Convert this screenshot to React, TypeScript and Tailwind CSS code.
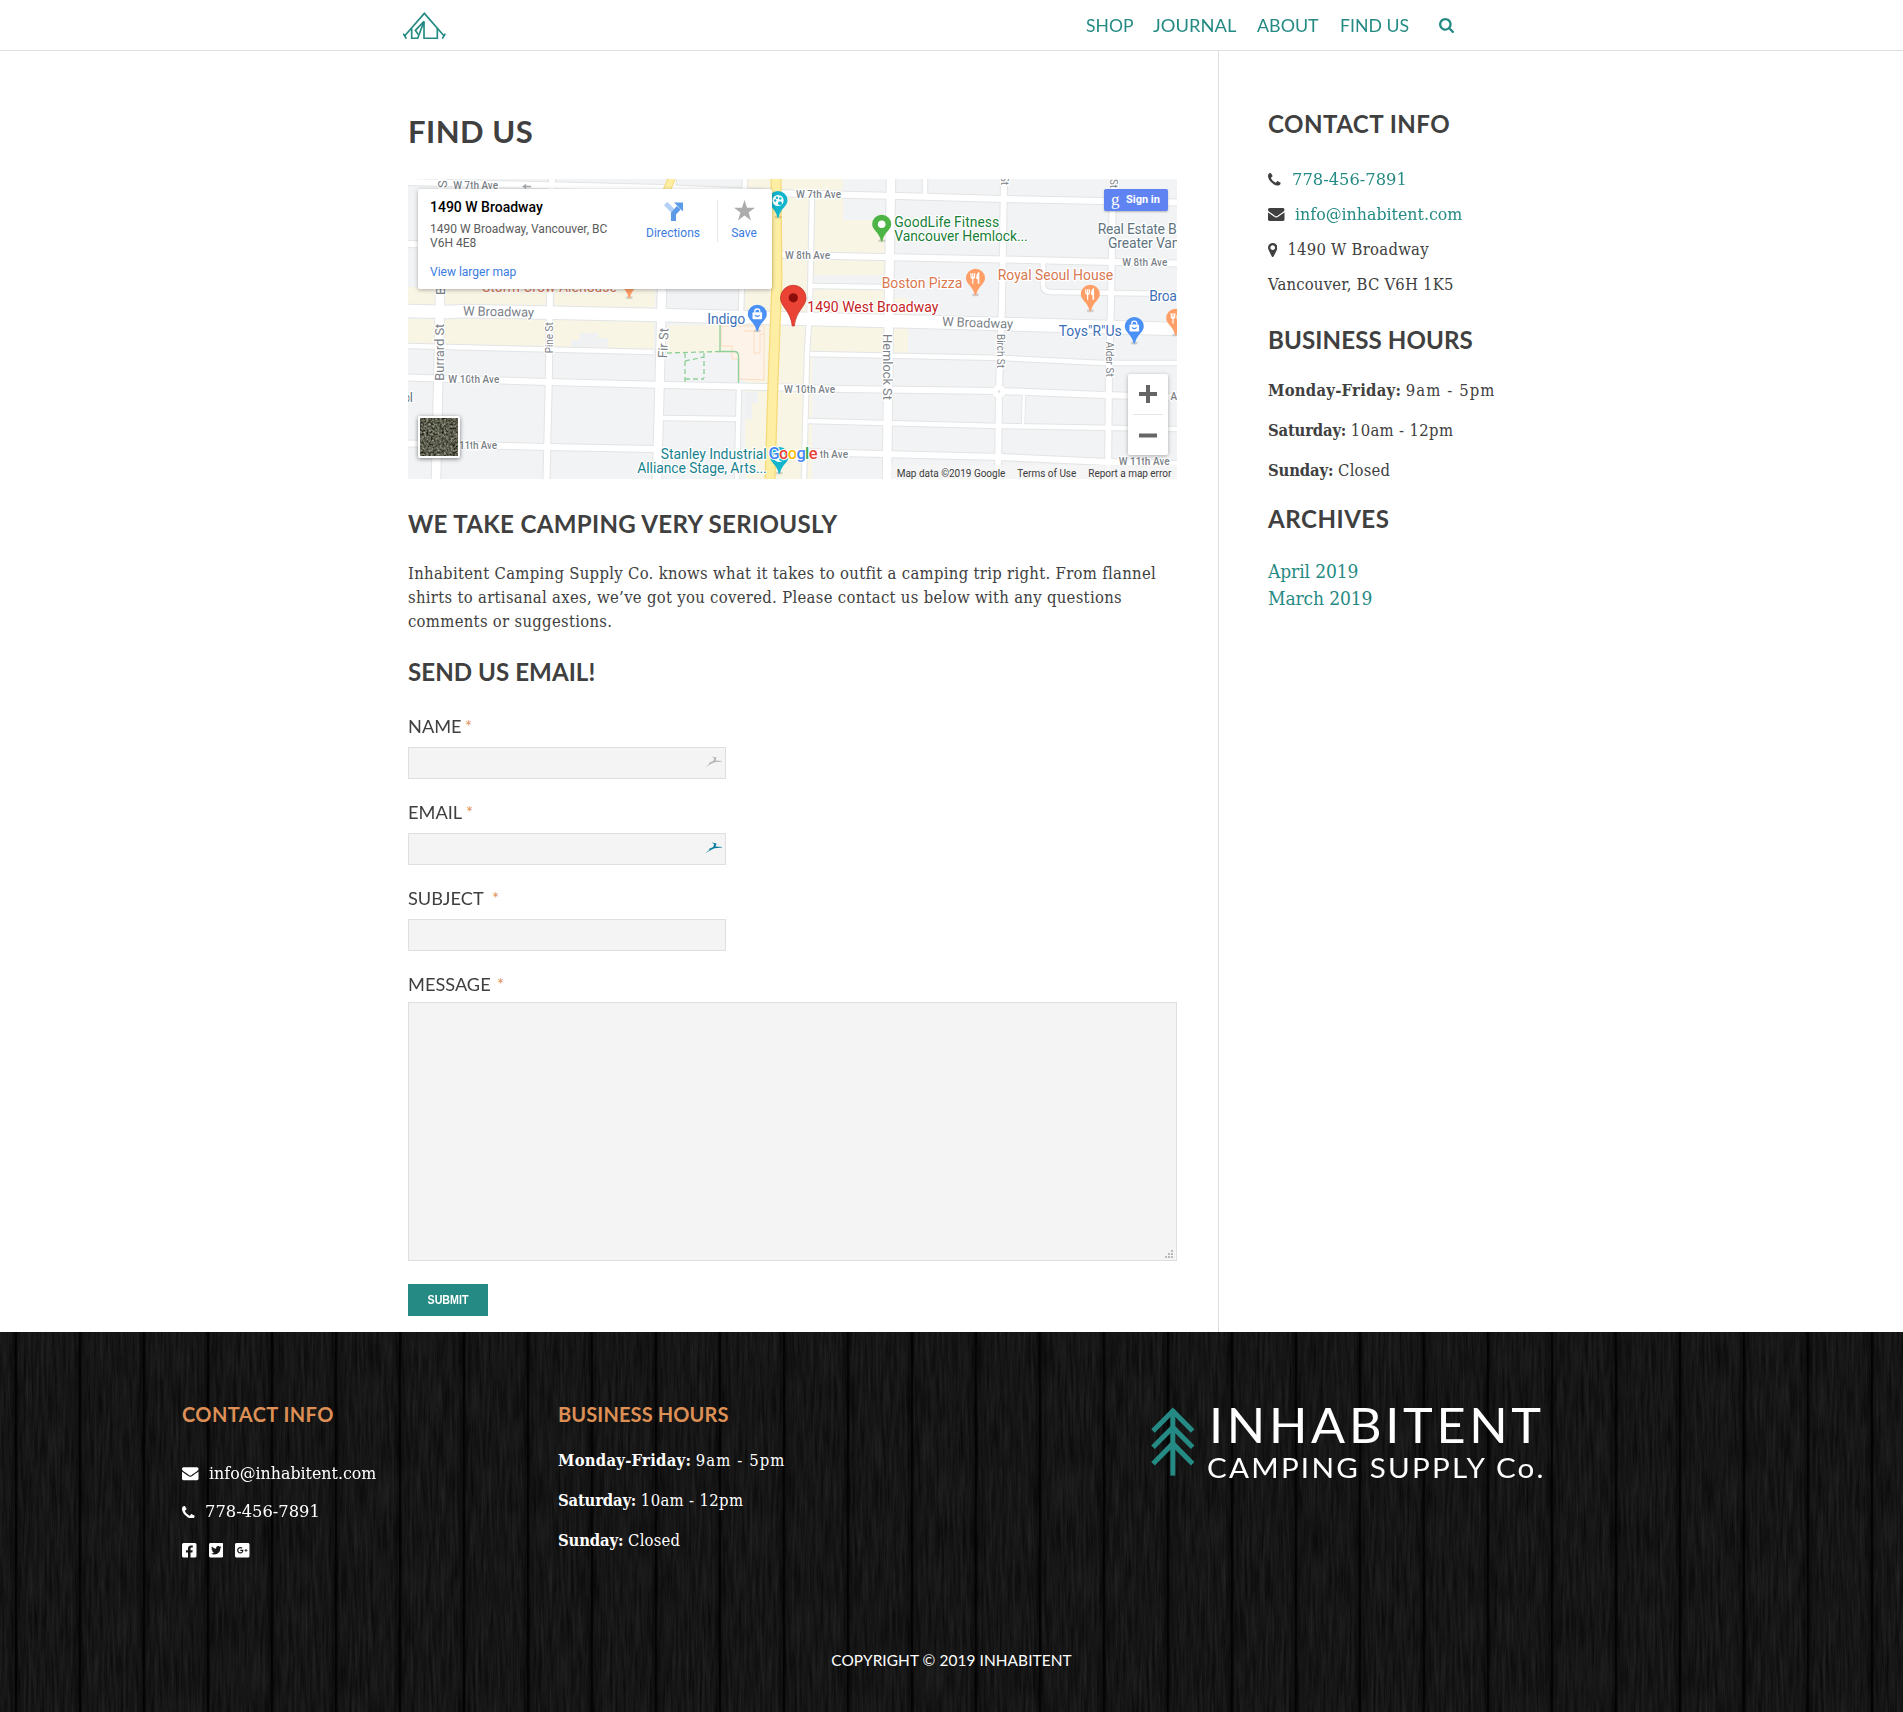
import type { ReactNode } from "react";
import { FaFacebookSquare, FaTwitterSquare, FaGooglePlusSquare } from "react-icons/fa";

const serif = "font-['DejaVu_Serif_Condensed','DejaVu_Serif',serif]";
const sans = "font-['Lato',sans-serif]";

function PhoneIcon({ className }: { className: string }) {
  return (
    <svg viewBox="0 128 1408 1408" className={className} fill="currentColor">
      <path d="M1408 1240q0 27-10 70.500t-21 68.500q-21 50-122 106-94 51-186 51-27 0-53-3.500t-57.500-12.500-47-14.500-55.500-20.500-49-18q-98-35-175-83-127-79-264-216t-216-264q-48-77-83-175-3-9-18-49t-20.500-55.500-14.500-47-12.500-57.500-3.500-53q0-92 51-186 56-101 106-122 25-11 68.500-21t70.500-10q14 0 21 3 18 6 53 76 11 19 30 54t35 63.500 31 53.500q3 4 17.500 25t21.500 35.500 7 28.500q0 20-28.500 50t-62 55-62 53-28.500 46q0 9 5 22.500t8.500 20.500 14 24 11.500 19q76 137 174 235t235 174q2 1 19 11.500t24 14 20.500 8.500 22.500 5q18 0 46-28.500t53-62 55-62 50-28.500q14 0 28.500 7t35.500 21.500 25 17.500q25 15 53.500 31t63.500 35 54 30q70 35 76 53 3 7 3 21z" />
    </svg>
  );
}

function EnvelopeIcon({ className }: { className: string }) {
  return (
    <svg viewBox="0 256 1792 1408" className={className} fill="currentColor">
      <path d="M1792 710v794q0 66-47 113t-113 47h-1472q-66 0-113-47t-47-113v-794q44 49 101 87 362 246 497 345 57 42 92.500 65.500t94.500 48 110 24.500h2q51 0 110-24.500t94.500-48 92.500-65.500q170-123 498-345 57-39 100-87zm0-294q0 79-49 151t-122 123q-376 261-468 325-10 7-42.500 31t-54 38.500-52 32.500-57.500 27-50 9h-2q-23 0-50-9t-57.500-27-52-32.500-54-38.500-42.500-31q-91-64-262-182.500t-205-142.500q-62-42-117-115.500t-55-136.500q0-78 41.500-130t118.500-52h1472q65 0 112.500 47t47.500 113z" />
    </svg>
  );
}

function MarkerIcon({ className }: { className: string }) {
  return (
    <svg viewBox="0 128 1024 1536" className={className} fill="currentColor">
      <path d="M768 640q0-106-75-181t-181-75-181 75-75 181 75 181 181 75 181-75 75-181zm256 0q0 109-33 179l-364 774q-16 33-47.500 52t-67.500 19-67.500-19-46.500-52l-365-774q-33-70-33-179 0-212 150-362t362-150 362 150 150 362z" />
    </svg>
  );
}

function SearchIcon({ className }: { className: string }) {
  return (
    <svg viewBox="0 128 1664 1664" className={className} fill="currentColor">
      <path d="M1152 832q0-185-131.500-316.500t-316.500-131.500-316.500 131.500-131.500 316.500 131.500 316.500 316.500 131.500 316.500-131.500 131.500-316.500zm512 832q0 52-38 90t-90 38q-54 0-90-38l-343-342q-179 124-399 124-143 0-273.500-55.500t-225-150-150-225-55.500-273.500 55.500-273.500 150-225 225-150 273.500-55.500 273.500 55.500 225 150 150 225 55.500 273.500q0 220-124 399l343 343q37 37 37 90z" />
    </svg>
  );
}

function TentLogo() {
  return (
    <svg viewBox="0 0 128 82" className="h-[27.3px] w-[42.7px]" fill="none" stroke="#248a83" strokeWidth="5">
      <path d="M4 73 64 4 124 73" />
      <path d="M1 65 10 80M127 65 118 80" />
      <path d="M26 50V79H44L63 28V79H103V48" />
      <path d="M63 28 37 55 46 68" />
    </svg>
  );
}

function Header() {
  return (
    <header className="flex h-[51px] items-center border-b border-[#dfdfdf] bg-white pt-px pl-[403px]">
      <TentLogo />
      <nav className={`${sans} ml-[640px] flex items-center text-[16.7px] leading-6 text-[#248a83]`}>
        <a className="w-[67px] whitespace-nowrap">
          <span className="inline-block origin-left scale-x-[1.05]">SHOP</span>
        </a>
        <a className="w-[104px] whitespace-nowrap">
          <span className="inline-block origin-left scale-x-[1.1]">JOURNAL</span>
        </a>
        <a className="w-[83px] whitespace-nowrap">
          <span className="inline-block origin-left scale-x-[1.07]">ABOUT</span>
        </a>
        <a className="w-[99px] whitespace-nowrap">
          <span className="inline-block origin-left scale-x-[1.06]">FIND US</span>
        </a>
        <SearchIcon className="mb-px size-[15px]" />
      </nav>
    </header>
  );
}

const minorRoads = [
  "M404 107 475 108",
  "M635 82V106Q635 113 643 113L769 115",
  "M0 167 245 173",
  "M402 175 595 179 695 184 769 184",
  "M255 239 330 240",
  "M400 242 592 247 769 250",
  "M337 0 333 135",
  "M331 208 329 300",
  "M404 18 402 124 399 175 396 300",
  "M517 0V15",
];
const streets = [
  "M0 3 255 9 382 14.500 490 17 595 20 769 23.500",
  "M0 65 372 75.500 425 77 595 80.500 769 84.500",
  "M0 198.500 139 203 259 206 359 208 432 210 592 212 695 216 769 218",
  "M0 264.500 139 268 247 270",
  "M396 273 592 278 700 283 769 285",
  "M144 0 142 110 141 190 138.500 300",
  "M596 0 594 124 591 211 590 300",
  "M705 0 703 124 701 190 700 300",
];
const avenues = ["M34 0 31 170 28 300", "M264 0 255 50 254 110 252 190 249 300", "M483 0 481 124 479 300"];
const broadway = "M0 132 40 133 60 132 250 136 402 140 595 145 769 150";

function RoadSet({ paths, width }: { paths: string[]; width: number }) {
  return (
    <>
      {paths.map((d) => (
        <path key={d} d={d} strokeWidth={width} />
      ))}
    </>
  );
}

function Pin({ x, y, color, children }: { x: number; y: number; color: string; children?: ReactNode }) {
  return (
    <g transform={`translate(${x} ${y})`}>
      <ellipse cx="0" cy="16.500" rx="3.500" ry="1.500" fill="#000" opacity="0.150" />
      <path d="M-9.500 0A9.500 9.500 0 0 1 9.500 0C9.500 6 2.500 7.500 .600 17H-.600C-2.500 7.500-9.500 6-9.500 0Z" fill={color} />
      {children}
    </g>
  );
}

const fork = (
  <g fill="none" stroke="#fff" strokeWidth="1.200">
    <path d="M-4.500-5V-2Q-4.500 0-2.700 0T-.900-2V-5M-2.700-5V5.500" />
    <path d="M3 5.500V-5Q1.500-4 1.500 0H3" strokeWidth="1.600" />
  </g>
);
const bag = (
  <g>
    <rect x="-4.800" y="-2" width="9.600" height="7" rx="1" fill="#fff" />
    <path d="M-2.500-2V-3Q-2.500-5.300 0-5.300T2.500-3V-2" fill="none" stroke="#fff" strokeWidth="1.300" />
    <path d="M-2.300.800Q0 3.500 2.300.800" fill="none" stroke="#4a90f5" strokeWidth="1.200" />
  </g>
);
const palette = (
  <g>
    <circle r="5.600" fill="#fff" />
    <g fill="#12b5cb">
      <circle cx="-2.800" cy="0" r="1.200" />
      <circle cx="-1" cy="-2.800" r="1.200" />
      <circle cx="2.300" cy="-2" r="1.200" />
      <circle cx="2" cy="2.800" r="2" />
    </g>
  </g>
);

type Label = { t: string; x: number; y: number; w: number; s: number; c: string; r?: number; m?: boolean };
const gray = "#7b8187";
const labels: Label[] = [
  { t: "1490 West Broadway", x: 399.3, y: 132.9, w: 131, s: 14, c: "#c5221f" },
  { t: "GoodLife Fitness", x: 486.3, y: 48.3, w: 105, s: 14, c: "#188038" },
  { t: "Vancouver Hemlock...", x: 486.3, y: 62.3, w: 133.5, s: 14, c: "#188038" },
  { t: "Boston Pizza", x: 473.7, y: 109.3, w: 80.6, s: 14, c: "#d9774f" },
  { t: "Royal Seoul House", x: 589.7, y: 101.3, w: 115.6, s: 14, c: "#d9774f" },
  { t: "Real Estate B", x: 689.7, y: 55.3, w: 79, s: 14, c: "#607480" },
  { t: "Greater Van", x: 700, y: 69.3, w: 71.5, s: 14, c: "#607480" },
  { t: "Broa", x: 741.3, y: 122.3, w: 27.5, s: 14, c: "#3d6fb8" },
  { t: 'Toys"R"Us', x: 650.7, y: 157.3, w: 63, s: 14, c: "#3d6fb8" },
  { t: "Indigo", x: 299.3, y: 145, w: 38, s: 14, c: "#3d6fb8" },
  { t: "Storm Crow Alehouse", x: 74, y: 112.7, w: 135, s: 14, c: "#d9774f" },
  { t: "Stanley Industrial", x: 252.7, y: 280.3, w: 106, s: 14, c: "#16828e" },
  { t: "Alliance Stage, Arts...", x: 229.3, y: 294.3, w: 129.5, s: 14, c: "#16828e" },
  { t: "W Broadway", x: 55, y: 136.5, w: 71, s: 13, c: gray, r: 1 },
  { t: "W Broadway", x: 534, y: 147, w: 71, s: 13, c: gray, r: 2 },
  { t: "W 7th Ave", x: 45.3, y: 9.9, w: 44.7, s: 10, c: gray, m: true },
  { t: "W 7th Ave", x: 388, y: 18.5, w: 45, s: 10, c: gray, m: true },
  { t: "W 8th Ave", x: 377, y: 79.8, w: 45, s: 10, c: gray, m: true },
  { t: "W 8th Ave", x: 714.3, y: 86.7, w: 45, s: 10, c: gray, m: true },
  { t: "W 10th Ave", x: 40.3, y: 203.5, w: 51, s: 10, c: gray, m: true },
  { t: "W 10th Ave", x: 376, y: 213.5, w: 51, s: 10, c: gray, m: true },
  { t: "11th Ave", x: 51, y: 269.9, w: 38, s: 10, c: gray, m: true },
  { t: "th Ave", x: 412, y: 279, w: 28, s: 10, c: gray, m: true },
  { t: "W 11th Ave", x: 710.7, y: 285.9, w: 51, s: 10, c: gray, m: true },
  { t: "A", x: 762.5, y: 221, w: 6.5, s: 10, c: gray, m: true },
  { t: "ol", x: -5, y: 223, w: 10, s: 13, c: "#607480" },
  { t: "Burrard St", x: 36, y: 201.7, w: 57, s: 13, c: gray, r: -90 },
  { t: "B", x: 36.5, y: 116, w: 8, s: 13, c: gray, r: -90 },
  { t: "S", x: 39, y: 9, w: 8, s: 13, c: gray, r: -90 },
  { t: "Pine St", x: 145.3, y: 174.3, w: 31, s: 10, c: gray, r: -90 },
  { t: "Fir St", x: 259, y: 179.3, w: 30, s: 13, c: gray, r: -87 },
  { t: "Hemlock St", x: 475, y: 155, w: 66, s: 13, c: gray, r: 90 },
  { t: "Birch St", x: 589.3, y: 155, w: 34, s: 10, c: gray, r: 90 },
  { t: "Alder St", x: 698, y: 162.7, w: 35, s: 10, c: gray, r: 90 },
  { t: "St", x: 592.5, y: -3, w: 9, s: 10, c: gray, r: 90 },
  { t: "St", x: 702, y: 0, w: 9, s: 10, c: gray, r: 90 },
];

function StreetMap() {
  return (
    <svg viewBox="0 0 769 300" className="absolute inset-0 h-full w-full font-['Roboto',sans-serif]">
      <rect width="769" height="300" fill="#f1f3f4" />
      <g fill="#f9f5e5">
        <path d="M0 108H247V130H0ZM0 140H246V170H0ZM259 146H345V174H259ZM337 0H404V300H337Z" />
        <path d="M404 0H435V41H477V96H404ZM404 109H478V174H402ZM478 119H500V174H478Z" />
      </g>
      <path d="M171 154H190V159H200V168H163V161H171ZM337 213H350V224H344V240H337Z" fill="#eff1f3" />
      <g fill="none" stroke="#e2e4e6">
        <RoadSet paths={minorRoads} width={6.5} />
        <RoadSet paths={streets} width={8} />
        <RoadSet paths={avenues} width={10.5} />
        <path d={broadway} strokeWidth="14.500" />
        <path d="M616 216 615 247" strokeWidth="4" />
      </g>
      <g fill="none" stroke="#fff">
        <RoadSet paths={minorRoads} width={4.5} />
        <RoadSet paths={streets} width={6} />
        <RoadSet paths={avenues} width={8.5} />
        <path d={broadway} strokeWidth="12.500" />
        <path d="M616 216 615 247" strokeWidth="2.500" />
      </g>
      <circle cx="591" cy="212.500" r="6.500" fill="#fff" />
      <circle cx="591" cy="212.500" r="1.200" fill="#dcdee0" />
      <path d="M313 147H356V201L331 200V180H324V167H313Z" fill="#fef3e9" stroke="#fbdcc0" />
      <path d="M336 152H346V174H352V155H355" fill="none" stroke="#fbdcc0" />
      <g fill="none" stroke="#8fcf9a" strokeWidth="1.300">
        <path d="M312 146V172.500H326Q330.500 172.500 330.500 177V204" />
        <path d="M259 174 312 172.500M277 174V203M296 174V199M277 182 296 178M277 200H296" strokeDasharray="5 3" />
      </g>
      <g fill="none">
        <path d="M368 0 369 100 365 204 362 300" stroke="#f6d978" strokeWidth="11" />
        <path d="M368 0 369 100 365 204 362 300" stroke="#fdeea3" strokeWidth="8.500" />
        <path d="M264-1 258 13" stroke="#f6d978" strokeWidth="8" />
        <path d="M264-1 258 13" stroke="#fdeea3" strokeWidth="6" />
        <path d="M116 7.500H123M118 5.500 115.500 7.500 118 9.500" stroke="#a3a7aa" strokeWidth="1.500" />
      </g>
      <Pin x={370} y={21.5} color="#12b5cb">{palette}</Pin>
      <Pin x={371.3} y={277.5} color="#12b5cb">{palette}</Pin>
      <Pin x={221.3} y={102} color="#ff9e67" />
      <Pin x={473.7} y={45.3} color="#4db546">
        <circle r="3.800" fill="#fff" />
      </Pin>
      <Pin x={567.5} y={99.3} color="#ff9e67">{fork}</Pin>
      <Pin x={682.3} y={115.3} color="#ff9e67">{fork}</Pin>
      <Pin x={767.7} y={139.3} color="#ff9e67">{fork}</Pin>
      <Pin x={726.3} y={147.5} color="#4a90f5">{bag}</Pin>
      <Pin x={349.3} y={135.3} color="#4a90f5">{bag}</Pin>
      {labels.map((l, i) => (
        <text
          key={i}
          transform={`translate(${l.x} ${l.y}) rotate(${l.r ?? 0})`}
          fontSize={l.s}
          fontWeight={l.m ? 500 : 400}
          fill={l.c}
          stroke="#fff"
          strokeWidth="2.500"
          strokeLinejoin="round"
          paintOrder="stroke"
          textLength={l.w}
        >
          {l.t}
        </text>
      ))}
      <path
        d="M372.500 119A12.700 12.700 0 0 1 398 119C398 127.500 388 131.500 386.300 147H384.300C382.500 131.500 372.500 127.500 372.500 119Z"
        fill="#ea4335"
        stroke="#c5362b"
        strokeWidth="0.800"
      />
      <circle cx="385.300" cy="118.800" r="4.600" fill="#8c0d09" />
      <text x="360.500" y="279.500" fontSize="16.500" fontWeight="500" textLength="49" stroke="#fff" strokeWidth="2" paintOrder="stroke">
        <tspan fill="#4285f4">G</tspan>
        <tspan fill="#ea4335">o</tspan>
        <tspan fill="#fbbc05">o</tspan>
        <tspan fill="#4285f4">g</tspan>
        <tspan fill="#34a853">l</tspan>
        <tspan fill="#ea4335">e</tspan>
      </text>
      <rect x="483" y="286" width="286" height="14" fill="#f5f5f5" opacity="0.750" />
      <g fontSize="10" fill="#3c3c3c">
        <text x="488.700" y="298" textLength="108.700">Map data ©2019 Google</text>
        <text x="609.300" y="298" textLength="59">Terms of Use</text>
        <text x="680.300" y="298" textLength="83">Report a map error</text>
      </g>
    </svg>
  );
}

function MapCard() {
  return (
    <div className="absolute top-[10px] left-[10px] flex h-[100px] w-[354px] rounded-[2px] bg-white pl-3 text-[12px] shadow-[0_1px_4px_rgba(0,0,0,0.3)]">
      <div className="w-[205px] pt-[10px]">
        <div className="text-[14px] leading-[17px] font-medium text-black">1490 W Broadway</div>
        <div className="mt-[6px] leading-[14px] text-[#5b5b5b]">
          1490 W Broadway, Vancouver, BC
          <br />
          V6H 4E8
        </div>
        <div className="mt-[15px] leading-[14px] text-[#3a7be0]">View larger map</div>
      </div>
      <div className="flex w-[76px] flex-col items-center pt-[13px] text-[#3a7be0]">
        <svg viewBox="0 0 18 18" className="size-[19px]" fill="none">
          <path d="M1.500 1.500 9 9" stroke="#b3d1f8" strokeWidth="4.500" />
          <path d="M9 18V11L14 5.500" stroke="#5c9ae8" strokeWidth="4.800" />
          <path d="M9.500.500H18V9Z" fill="#5c9ae8" />
        </svg>
        <span className="mt-[5px] leading-[14px]">Directions</span>
      </div>
      <div className="mt-[11px] ml-[6px] h-[42px] w-px bg-[#e6e6e6]" />
      <div className="flex w-[52px] flex-col items-center pt-[11px] text-[#3a7be0]">
        <svg viewBox="0 0 20 20" className="size-[21px]" fill="#acacac">
          <path d="M10 0 12.400 7.300H20L13.900 11.800 16.200 19.500 10 14.800 3.800 19.500 6.100 11.800 0 7.300H7.600Z" />
        </svg>
        <span className="mt-[5px] leading-[14px]">Save</span>
      </div>
    </div>
  );
}

function SatelliteThumb() {
  return (
    <div className="absolute top-[237px] left-[10px] size-[42px] overflow-hidden rounded-[2px] border-2 border-white shadow-[0_1px_4px_rgba(0,0,0,0.5)]">
      <svg viewBox="0 0 38 38" className="size-full">
        <filter id="aerial" x="0" y="0" width="100%" height="100%" colorInterpolationFilters="sRGB">
          <feTurbulence type="fractalNoise" baseFrequency="0.450 0.500" numOctaves="3" seed="4" />
          <feColorMatrix values="0.900 0 0 0 -0.100  0.900 0 0 0 -0.095  0.850 0 0 0 -0.130  0 0 0 0 1" />
        </filter>
        <rect width="38" height="38" filter="url(#aerial)" />
        <path d="M0 8H38M0 19H38M0 30H38M6 0V38M17 0V38M29 0V38" stroke="#77786c" strokeWidth="0.700" opacity="0.600" />
      </svg>
    </div>
  );
}

function MapPanel() {
  return (
    <div className="relative mt-7 h-[300px] w-[769px] overflow-hidden font-['Roboto',sans-serif]">
      <StreetMap />
      <MapCard />
      <SatelliteThumb />
      <div className="absolute top-[10px] left-[696px] flex h-[22px] w-16 items-center rounded-[2px] bg-[#5f84f2] pl-[7px] text-white shadow-[0_1px_2px_rgba(0,0,0,0.25)]">
        <span className="w-[15px] font-['Liberation_Serif',serif] text-[17px] leading-[16px]">g</span>
        <span className="text-[11px] leading-[14px] font-bold">Sign in</span>
      </div>
      <div className="absolute top-[195px] left-[720px] flex h-[81px] w-10 flex-col items-center justify-between rounded-[2px] bg-white shadow-[0_1px_4px_rgba(0,0,0,0.3)]">
        <svg viewBox="0 0 40 40" className="size-10">
          <path d="M11 20H29M20 11V29" stroke="#666" strokeWidth="4" />
        </svg>
        <div className="h-px w-[30px] bg-[#e6e6e6]" />
        <svg viewBox="0 0 40 40" className="size-10">
          <path d="M11 20.500H29" stroke="#666" strokeWidth="4" />
        </svg>
      </div>
    </div>
  );
}

function FieldLabel({ text, width, className }: { text: string; width: string; className: string }) {
  return (
    <label className={`${sans} flex text-[16.7px] leading-6 ${className}`}>
      <span className={width}>
        <span className="inline-block origin-left scale-x-[1.09]">{text}</span>
      </span>
      <span className="text-[#e1935c]">*</span>
    </label>
  );
}

function Bird({ className }: { className: string }) {
  return (
    <svg viewBox="0 0 17 12" className={`absolute top-[9px] right-[4px] h-3 w-[17px] ${className}`} fill="currentColor">
      <path d="M0 11.600 4.500 7.700 3.800 7 8.200 5 9.200 2.200 6.800.600 11.600 1.400 10.500 4.600 17 4.900V5.600L9.500 6.300 5.800 8Z" />
    </svg>
  );
}

function TextField({ children }: { children?: ReactNode }) {
  return (
    <div className="relative mt-2 w-[318px]">
      <input className="block h-8 w-full border border-[#dfdfdf] bg-[#f4f4f4]" />
      {children}
    </div>
  );
}

const h2 = `${sans} text-[24.1px] leading-[30px] font-bold whitespace-nowrap`;

function MainColumn() {
  return (
    <main className="w-[811px] border-r border-[#dfdfdf] pb-4">
      <h1 className={`${sans} mt-[60px] text-[31px] leading-10 font-bold tracking-[0.5px]`}>FIND US</h1>
      <MapPanel />
      <h2 className={`${h2} mt-[30px] tracking-[0.3px]`}>WE TAKE CAMPING VERY SERIOUSLY</h2>
      <p className={`${serif} mt-[23px] text-[16.5px] leading-6 tracking-[0.31px] whitespace-nowrap`}>
        Inhabitent Camping Supply Co. knows what it takes to outfit a camping trip right. From flannel
        <br />
        shirts to artisanal axes, we’ve got you covered. Please contact us below with any questions
        <br />
        comments or suggestions.
      </p>
      <h2 className={`${h2} mt-[23px] tracking-[0.05px]`}>SEND US EMAIL!</h2>
      <form>
        <FieldLabel text="NAME" width="w-[57px]" className="mt-[28px]" />
        <TextField>
          <Bird className="text-[#b5b5b5]" />
        </TextField>
        <FieldLabel text="EMAIL" width="w-[58px]" className="mt-[22px]" />
        <TextField>
          <Bird className="text-[#087c9b]" />
        </TextField>
        <FieldLabel text="SUBJECT" width="w-[84px]" className="mt-[22px]" />
        <TextField />
        <FieldLabel text="MESSAGE" width="w-[89px]" className="mt-[22px]" />
        <div className="relative mt-[5px] w-[769px]">
          <textarea className="block h-[259px] w-full resize-none border border-[#dfdfdf] bg-[#f4f4f4]" />
          <svg viewBox="0 0 8 8" className="absolute right-[4px] bottom-[3px] size-2" fill="#b9b9b9">
            <path d="M6 0H8V2H6ZM3 3H5V5H3ZM6 3H8V5H6ZM0 6H2V8H0ZM3 6H5V8H3ZM6 6H8V8H6Z" />
          </svg>
        </div>
        <button
          type="button"
          className="mt-[23px] block h-8 w-20 bg-[#248a83] font-['Liberation_Sans',sans-serif] text-[12px] leading-8 font-bold text-white"
        >
          <span className="inline-block scale-x-[0.89] whitespace-nowrap">SUBMIT</span>
        </button>
      </form>
    </main>
  );
}

function Hours({ className }: { className: string }) {
  return (
    <div className={`${serif} text-[16.5px] leading-10 whitespace-nowrap ${className}`}>
      <p>
        <strong className="tracking-[0.24px]">Monday-Friday:</strong> <span className="tracking-[1.1px]">9am - 5pm</span>
      </p>
      <p>
        <strong className="tracking-[-0.2px]">Saturday:</strong> <span className="tracking-[0.35px]">10am - 12pm</span>
      </p>
      <p>
        <strong className="tracking-[-0.15px]">Sunday:</strong> <span className="tracking-[0.2px]">Closed</span>
      </p>
    </div>
  );
}

function PhoneNumber() {
  return <span className="inline-block origin-left scale-x-[1.1]">778-456-7891</span>;
}

function EmailAddress() {
  return <span className="inline-block origin-left scale-x-[1.067]">info@inhabitent.com</span>;
}

function Sidebar() {
  return (
    <aside className="pl-[49px]">
      <h2 className={`${h2} mt-[58px] tracking-[0.45px]`}>CONTACT INFO</h2>
      <div className={`${serif} mt-[23px] text-[16.5px] leading-[35px] whitespace-nowrap`}>
        <p className="flex items-center">
          <PhoneIcon className="mr-[11px] size-[12.6px]" />
          <a className="text-[#248a83]">
            <PhoneNumber />
          </a>
        </p>
        <p className="flex items-center">
          <EnvelopeIcon className="mr-[10px] h-[13px] w-[16.5px]" />
          <a className="text-[#248a83]">
            <EmailAddress />
          </a>
        </p>
        <p className="flex items-center">
          <MarkerIcon className="mr-[10px] h-[14px] w-[9.4px]" />
          <span className="tracking-[0.25px]">1490 W Broadway</span>
        </p>
        <p className="tracking-[0.2px]">Vancouver, BC V6H 1K5</p>
      </div>
      <h2 className={`${h2} mt-[23px] tracking-[0.1px]`}>BUSINESS HOURS</h2>
      <Hours className="mt-[16px]" />
      <h2 className={`${h2} mt-[13px] tracking-[0.5px]`}>ARCHIVES</h2>
      <div className={`${serif} mt-[24px] text-[19px] leading-[27px] tracking-[-0.1px] text-[#248a83]`}>
        <p>April 2019</p>
        <p>March 2019</p>
      </div>
    </aside>
  );
}

function WoodBackground() {
  return (
    <svg className="absolute inset-0 h-full w-full">
      <defs>
        <filter id="grain" x="0" y="0" width="100%" height="100%" colorInterpolationFilters="sRGB">
          <feTurbulence type="fractalNoise" baseFrequency="0.380 0.022" numOctaves="4" seed="7" />
          <feColorMatrix values="0.120 0.030 0 0 0.011  0.120 0.030 0 0 0.011  0.120 0.030 0 0 0.011  0 0 0 0 1" />
        </filter>
        <linearGradient id="plankShade">
          <stop offset="0" stopColor="#000" stopOpacity="0.900" />
          <stop offset="0.030" stopColor="#000" stopOpacity="0.750" />
          <stop offset="0.045" stopColor="#000" stopOpacity="0.150" />
          <stop offset="0.200" stopColor="#000" stopOpacity="0" />
          <stop offset="0.900" stopColor="#000" stopOpacity="0" />
          <stop offset="1" stopColor="#000" stopOpacity="0.400" />
        </linearGradient>
        <pattern id="planks" x="15" width="64" height="380" patternUnits="userSpaceOnUse">
          <rect width="64" height="380" fill="url(#plankShade)" />
        </pattern>
      </defs>
      <rect width="100%" height="100%" fill="#151515" />
      <rect width="100%" height="100%" filter="url(#grain)" />
      <rect width="100%" height="100%" fill="url(#planks)" />
    </svg>
  );
}

function BrandLogo() {
  return (
    <div className="flex pt-[75px]">
      <svg viewBox="95 112 132 208" className="h-[69.3px] w-11" fill="none" stroke="#248a83" strokeWidth="15">
        <path d="M160.500 120V318" />
        <path d="M101 184 160.500 124 220 184M101 233 160.500 173 220 233M101 282 160.500 222 220 282" />
      </svg>
      <div className={`${sans} ml-3 whitespace-nowrap text-white`}>
        <div className="mt-[-8px] ml-0.5 origin-left scale-x-[1.06] text-[47.5px] leading-[52px] tracking-[3.5px]">INHABITENT</div>
        <div className="mt-px origin-left scale-x-[1.06] text-[27.9px] leading-[30px] tracking-[2.1px]">CAMPING SUPPLY Co.</div>
      </div>
    </div>
  );
}

function Footer() {
  const heading = `${sans} text-[20px] leading-[26px] font-bold text-[#dd8f55] whitespace-nowrap`;
  return (
    <footer className="relative h-[380px] overflow-hidden bg-[#151515] text-white">
      <WoodBackground />
      <div className="relative flex h-[313px] pl-[182px]">
        <section className="w-[376px]">
          <h3 className={`${heading} mt-[69px] tracking-[0.42px]`}>CONTACT INFO</h3>
          <div className={`${serif} mt-[28px] text-[16.5px] leading-[38px]`}>
            <p className="flex items-center">
              <EnvelopeIcon className="mr-[10px] h-[13.5px] w-[16.5px]" />
              <EmailAddress />
            </p>
            <p className="flex items-center">
              <PhoneIcon className="mr-[10px] size-[12.6px]" />
              <PhoneNumber />
            </p>
            <p className="flex h-[38px] items-center gap-3">
              <FaFacebookSquare className="h-[16.5px] w-[14.5px]" />
              <FaTwitterSquare className="h-[16.5px] w-[14.5px]" />
              <FaGooglePlusSquare className="h-[16.5px] w-[14.5px]" />
            </p>
          </div>
        </section>
        <section className="w-[593px]">
          <h3 className={`${heading} mt-[69px] tracking-[0.12px]`}>BUSINESS HOURS</h3>
          <Hours className="mt-[14px]" />
        </section>
        <BrandLogo />
      </div>
      <p className={`${sans} relative text-center text-[15.4px] leading-[30px] tracking-[0.08px]`}>COPYRIGHT © 2019 INHABITENT</p>
    </footer>
  );
}

export default function App() {
  return (
    <div className="min-h-[1712px] bg-white text-[#404040]">
      <Header />
      <div className="flex h-[1281px] pl-[408px]">
        <MainColumn />
        <Sidebar />
      </div>
      <Footer />
    </div>
  );
}
